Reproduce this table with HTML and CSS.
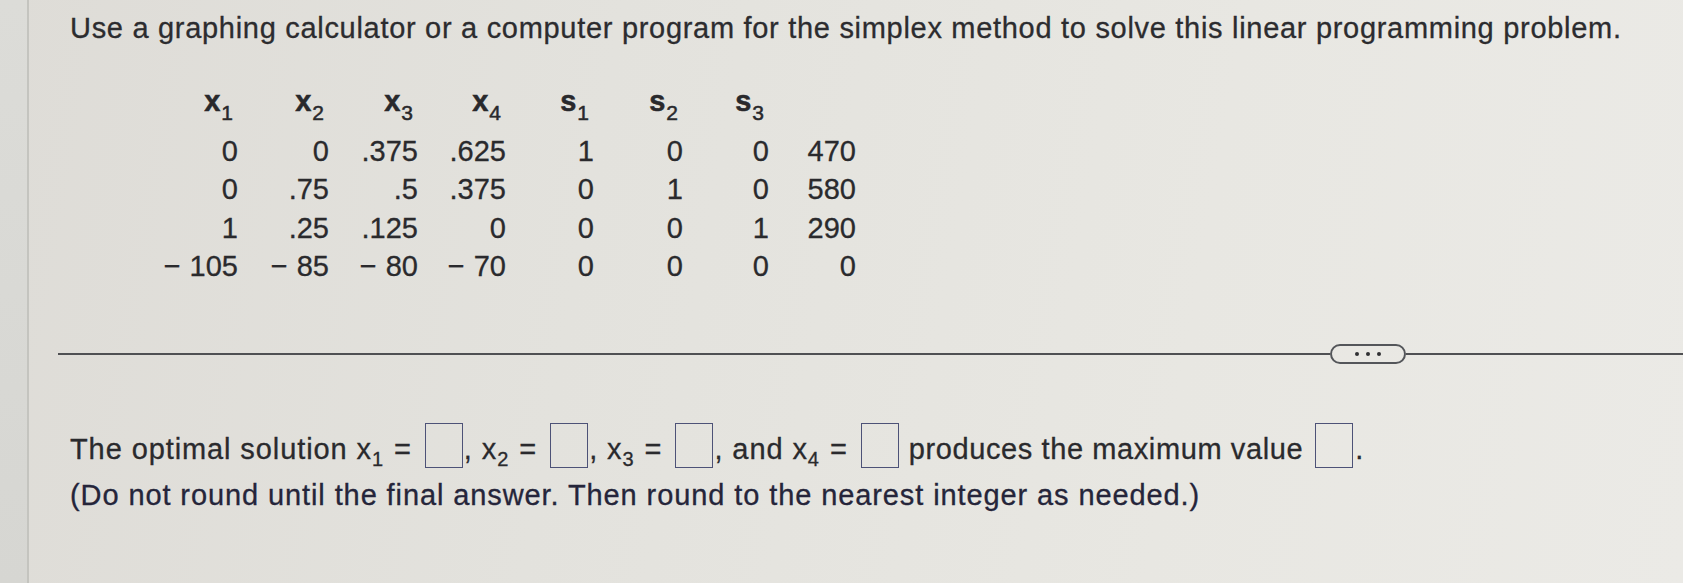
FILE: index.html
```html
<!DOCTYPE html>
<html lang="en">
<head>
<meta charset="utf-8">
<title>Simplex method problem</title>
<link rel="stylesheet" href="styles.css">
</head>
<body>
<div class="screen">
  <div class="gutter"></div>
  <main class="content">
    <p class="title">Use a graphing calculator or a computer program for the simplex method to solve this linear programming problem.</p>

    <div class="tableau">
      <div class="hd">x<span class="sub">1</span></div>
      <div class="hd">x<span class="sub">2</span></div>
      <div class="hd">x<span class="sub">3</span></div>
      <div class="hd">x<span class="sub">4</span></div>
      <div class="hd">s<span class="sub">1</span></div>
      <div class="hd">s<span class="sub">2</span></div>
      <div class="hd">s<span class="sub">3</span></div>
      <div class="hd"></div>

      <div class="c">0</div><div class="c">0</div><div class="c">.375</div><div class="c">.625</div><div class="c">1</div><div class="c">0</div><div class="c">0</div><div class="c">470</div>
      <div class="c">0</div><div class="c">.75</div><div class="c">.5</div><div class="c">.375</div><div class="c">0</div><div class="c">1</div><div class="c">0</div><div class="c">580</div>
      <div class="c">1</div><div class="c">.25</div><div class="c">.125</div><div class="c">0</div><div class="c">0</div><div class="c">0</div><div class="c">1</div><div class="c">290</div>
      <div class="c"><span class="minus">−</span>105</div><div class="c"><span class="minus">−</span>85</div><div class="c"><span class="minus">−</span>80</div><div class="c"><span class="minus">−</span>70</div><div class="c">0</div><div class="c">0</div><div class="c">0</div><div class="c">0</div>
    </div>

    <div class="divider">
      <div class="rule"></div>
      <div class="pill"><span class="dot"></span><span class="dot"></span><span class="dot"></span></div>
      <div class="rule rule-end"></div>
    </div>

    <div class="answer">
      <p class="line">The optimal solution x<span class="sub">1</span><span class="eq">=</span><span class="box"></span>, x<span class="sub">2</span><span class="eq">=</span><span class="box"></span>, x<span class="sub">3</span><span class="eq">=</span><span class="box"></span>, and x<span class="sub">4</span><span class="eq">=</span><span class="box"></span> <span class="tail">produces the maximum value</span><span class="box box-end"></span>.</p>
      <p class="line note">(Do not round until the final answer. Then round to the nearest integer as needed.)</p>
    </div>
  </main>
</div>
</body>
</html>
```

FILE: styles.css
```css
html, body {
  margin: 0;
  padding: 0;
}

body {
  width: 1683px;
  height: 583px;
  overflow: hidden;
  font-family: "Liberation Sans", Arial, Helvetica, sans-serif;
  color: #2a2a2d;
  -webkit-text-stroke: 0.3px currentColor;
  background: linear-gradient(100deg, #dedcd7 0%, #e3e2dd 35%, #e8e7e2 70%, #ebeae6 100%);
}

.screen {
  display: flex;
  height: 583px;
}

.gutter {
  width: 27px;
  flex: none;
  background: linear-gradient(180deg, #dcdcd8 0%, #d6d6d2 100%);
  border-right: 2px solid #c4c4bf;
}

.content {
  flex: 1;
  padding-left: 41px;
}

.title {
  margin: 0;
  padding-top: 11px;
  font-size: 29px;
  line-height: 34px;
  letter-spacing: 0.7px;
  white-space: nowrap;
  color: #2c2c2f;
}

.tableau {
  display: grid;
  grid-template-columns: 87px 91px 89px 88px 88px 89px 86px 87px;
  grid-template-rows: 50px repeat(4, 38.3px);
  margin-top: 37px;
  margin-left: 81px;
  font-size: 29px;
  line-height: 38.3px;
  text-align: right;
  width: max-content;
}

.hd {
  font-size: 29px;
  font-weight: bold;
  line-height: 38px;
  padding-right: 5px;
  color: #29292c;
  -webkit-text-stroke: 0.5px currentColor;
}

.hd .sub {
  font-size: 21px;
  font-weight: normal;
  vertical-align: -9px;
  line-height: 1;
  margin-left: 1px;
}

.c {
  white-space: nowrap;
}

.minus {
  margin-right: 9px;
}

.divider {
  display: flex;
  align-items: center;
  margin-top: 59px;
  margin-left: -12px;
  height: 20px;
}

.rule {
  flex: 1;
  height: 2px;
  background: #4f5053;
}

.rule-end {
  flex: none;
  width: 277px;
}

.pill {
  flex: none;
  display: flex;
  align-items: center;
  justify-content: center;
  gap: 7px;
  width: 72px;
  height: 16px;
  border: 2px solid #54565a;
  border-radius: 10px;
}

.dot {
  width: 4px;
  height: 4px;
  border-radius: 50%;
  background: #303033;
}

.answer {
  margin-top: 59px;
  font-size: 29px;
  letter-spacing: 0.9px;
}

.line {
  margin: 0;
  line-height: 46px;
  white-space: nowrap;
}

.line .sub {
  font-size: 20px;
  vertical-align: -7px;
  line-height: 1;
  letter-spacing: 0;
}

.eq {
  margin-left: 11px;
  margin-right: 1px;
}

.tail {
  letter-spacing: 0.6px;
}

.box {
  display: inline-block;
  width: 36px;
  height: 43px;
  margin-left: 12px;
  margin-right: 1px;
  border: 1.5px solid #4d5277;
  vertical-align: -9px;
}

.box-end {
  margin-left: 12px;
  margin-right: 2px;
}

.note {
  color: #25253a;
}
```
